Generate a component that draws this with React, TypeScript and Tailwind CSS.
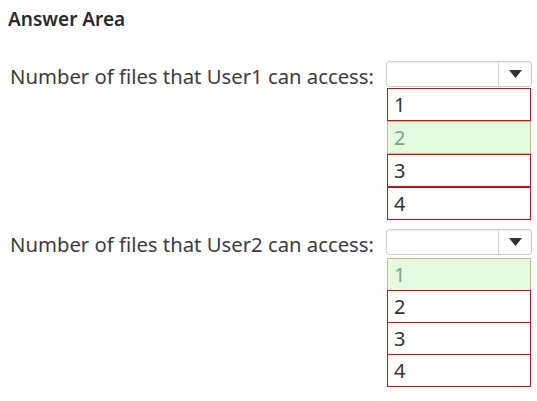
import React from "react";

type Group = { label: string; options: string[]; picked: number; gapTop: string; rowGap: string };

const groups: Group[] = [
  { label: "Number of files that User1 can access:", options: ["1", "2", "3", "4"], picked: 1, gapTop: "mt-px", rowGap: "" },
  { label: "Number of files that User2 can access:", options: ["1", "2", "3", "4"], picked: 0, gapTop: "mt-[3px]", rowGap: "-mt-px first:mt-0" },
];

function Dropdown() {
  return (
    <div className="flex h-[26px] w-[146px] rounded-[3px] border border-[#cfcfcf] bg-white shadow-[inset_0_1px_2px_rgba(0,0,0,0.06)]">
      <div className="flex-1" />
      <div className="flex w-[33px] items-center justify-center border-l border-[#d8d8d8]">
        <svg width="13" height="8" viewBox="0 0 13 8">
          <path d="M0 0H13L6.5 8Z" fill="#333" />
        </svg>
      </div>
    </div>
  );
}

function Question({ g }: { g: Group }) {
  return (
    <div className="flex">
      <div className="w-[386px] pl-[10px] pt-[2px] text-[20.3px] leading-[26px] text-[#3d3d3d]">{g.label}</div>
      <div className="flex w-[146px] flex-col">
        <Dropdown />
        <div className={`${g.gapTop} flex flex-col px-px`}>
          {g.options.map((o, i) => {
            const picked = i === g.picked;
            return (
              <div
                key={o}
                className={
                  picked
                    ? `${g.rowGap} flex h-[33px] items-center border border-[#d9b48a] bg-[#e5fbe1] pl-[6px] text-[20px] text-[#78a878]`
                    : `${g.rowGap} flex h-[33px] items-center border border-[#c8101a] bg-white pl-[6px] text-[20px] text-[#333]`
                }
              >
                {o}
              </div>
            );
          })}
        </div>
      </div>
    </div>
  );
}

export default function App() {
  return (
    <div
      className="flex h-[401px] w-[537px] flex-col bg-white"
      style={{ fontFamily: '"Noto Sans", "Open Sans", sans-serif' }}
    >
      <h1 className="pl-[8px] pt-[5px] text-[19px] font-semibold leading-[28px] text-[#2a2a2a]">Answer Area</h1>
      <div className="mt-[28px]">
        <Question g={groups[0]} />
      </div>
      <div className="mt-[9px]">
        <Question g={groups[1]} />
      </div>
    </div>
  );
}
